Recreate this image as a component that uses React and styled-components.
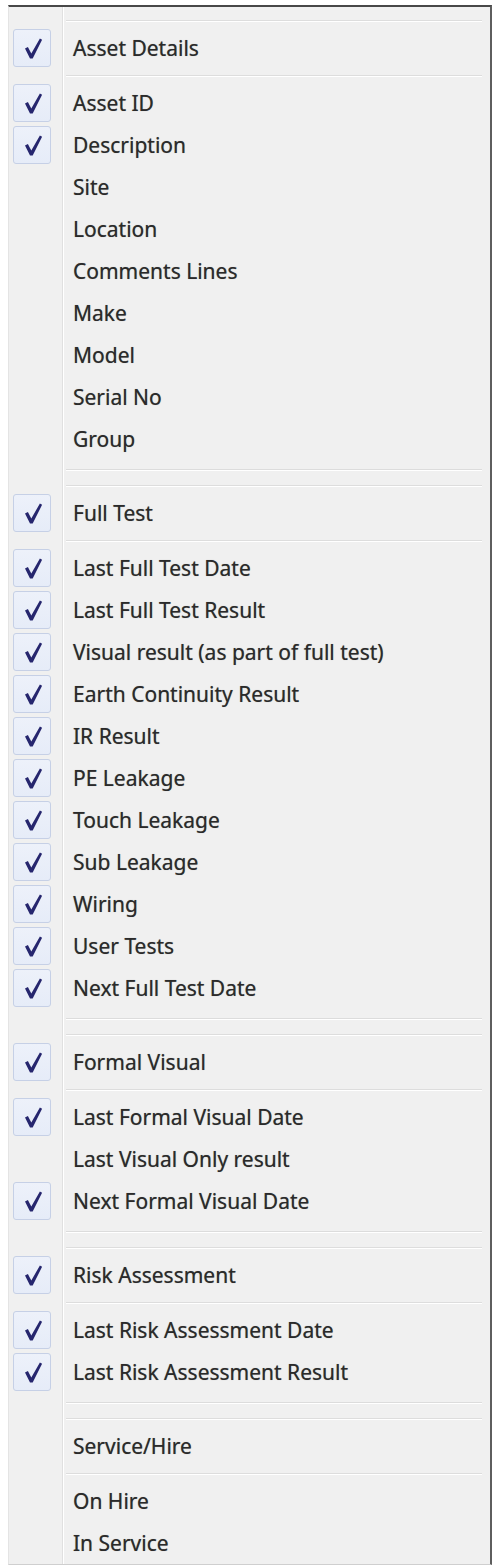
import React from 'react';
import styled, {createGlobalStyle} from 'styled-components';

const GlobalStyle = createGlobalStyle`
    body {
        margin: 0;
        background: #ffffff;
        font-family: "Noto Sans", "Open Sans", Arial, sans-serif;
    }
`;

const sections = [
    {
        title: 'Asset Details',
        checked: true,
        items: [
            ['Asset ID', true],
            ['Description', true],
            ['Site', false],
            ['Location', false],
            ['Comments Lines', false],
            ['Make', false],
            ['Model', false],
            ['Serial No', false],
            ['Group', false]
        ]
    },
    {
        title: 'Full Test',
        checked: true,
        items: [
            ['Last Full Test Date', true],
            ['Last Full Test Result', true],
            ['Visual result (as part of full test)', true],
            ['Earth Continuity Result', true],
            ['IR Result', true],
            ['PE Leakage', true],
            ['Touch Leakage', true],
            ['Sub Leakage', true],
            ['Wiring', true],
            ['User Tests', true],
            ['Next Full Test Date', true]
        ]
    },
    {
        title: 'Formal Visual',
        checked: true,
        items: [
            ['Last Formal Visual Date', true],
            ['Last Visual Only result', false],
            ['Next Formal Visual Date', true]
        ]
    },
    {
        title: 'Risk Assessment',
        checked: true,
        items: [
            ['Last Risk Assessment Date', true],
            ['Last Risk Assessment Result', true]
        ]
    },
    {
        title: 'Service/Hire',
        checked: false,
        items: [
            ['On Hire', false],
            ['In Service', false]
        ]
    }
];

const CheckMark = () => (
    <svg width="38" height="38" viewBox="0 0 38 38">
        <path d="M12 19.6 L14.9 18 L18.3 24.6 L26.9 9.4 L29.1 10.8 L19.7 29.6 L17 29.6 Z" fill="#26266e" />
    </svg>
);

const Row = ({label, checked, header}) => (
    <RowRoot header={header}>
        <Gutter>{checked && <CheckBox><CheckMark /></CheckBox>}</Gutter>
        {header ? <HeaderLabel>{label}</HeaderLabel> : <Label>{label}</Label>}
    </RowRoot>
);

export default function App() {
    return (
        <>
            <GlobalStyle />
            <Menu>
                {sections.map((section, index) => (
                    <Section key={section.title}>
                        {index > 0 && (
                            <SeparatorRow>
                                <Gutter />
                                <SeparatorLine />
                            </SeparatorRow>
                        )}
                        <Row label={section.title} checked={section.checked} header />
                        <Items>
                            {section.items.map(([label, checked]) => (
                                <Row key={label} label={label} checked={checked} />
                            ))}
                        </Items>
                    </Section>
                ))}
            </Menu>
        </>
    );
}

const Menu = styled.div`
    box-sizing: border-box;
    width: 484px;
    margin: 5px 0 0 8px;
    padding: 13px 0 0;
    border-top: 2px solid #484848;
    border-right: 2px solid #5e5e5e;
    border-left: 1px solid #e4e4e4;
    border-bottom: 1px solid #cfcfcf;
    background:
        linear-gradient(to right, transparent 53px, #e0e0e0 53px, #e0e0e0 54px, #ffffff 54px, #ffffff 55px, transparent 55px),
        #f0f0f0;
`;

const Section = styled.div`
    display: flex;
    flex-direction: column;
`;

const Items = styled.div`
    display: flex;
    flex-direction: column;
    padding-top: 6px;
`;

const RowRoot = styled.div`
    display: flex;
    align-items: stretch;
    height: ${props => (props.header ? 56 : 42)}px;
`;

const Gutter = styled.div`
    flex: none;
    width: 55px;
    display: flex;
    align-items: center;
    padding-left: 4px;
    box-sizing: border-box;
`;

const CheckBox = styled.div`
    width: 38px;
    height: 38px;
    box-sizing: border-box;
    border: 1px solid #c6d0e6;
    border-radius: 3px;
    background: linear-gradient(#edf1fa, #e6ecf8);
    display: flex;
    align-items: center;
    justify-content: center;

    svg {
        display: block;
        margin: -1px;
    }
`;

const Label = styled.div`
    flex: 1;
    display: flex;
    align-items: center;
    padding-left: 9px;
    font-size: 21px;
    color: #2a2a2a;
    text-shadow: 0 0 0.7px rgba(0, 0, 0, 0.45);
    white-space: nowrap;
`;

const HeaderLabel = styled(Label)`
    margin: 0 8px 0 2px;
    padding-left: 7px;
    border-top: 1px solid #dddddd;
    border-bottom: 1px solid #dddddd;
    box-shadow: inset 0 1px 0 #ffffff, 0 1px 0 #ffffff;
`;

const SeparatorRow = styled.div`
    display: flex;
    height: 25px;
`;

const SeparatorLine = styled.div`
    flex: 1;
    align-self: flex-start;
    height: 1px;
    margin: 9px 8px 0 2px;
    background: #dcdcdc;
    box-shadow: 0 1px 0 #ffffff;
`;
